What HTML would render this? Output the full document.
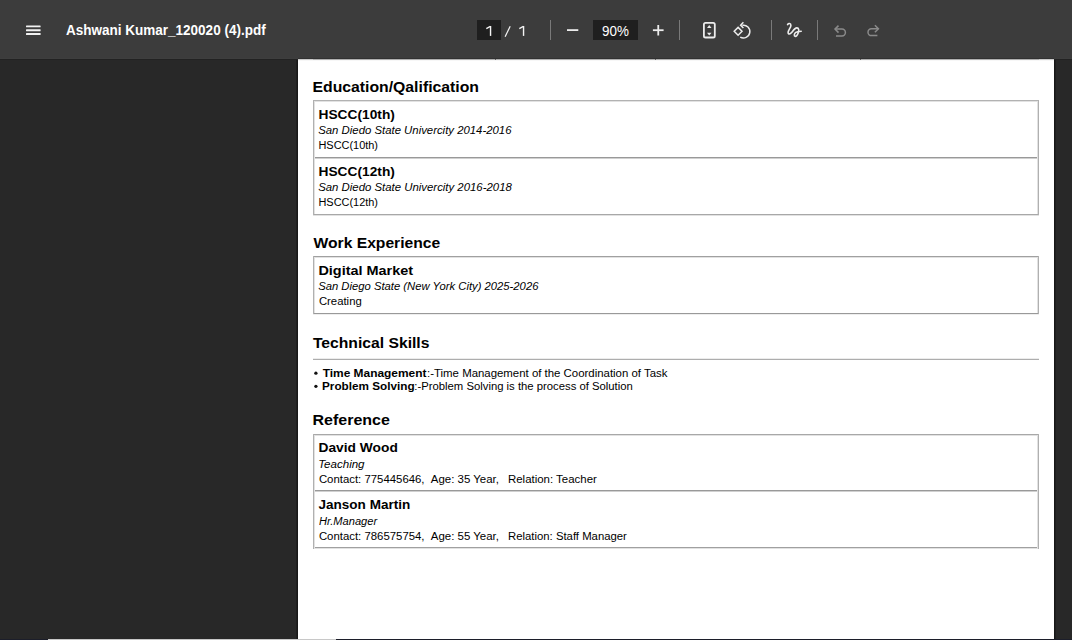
<!DOCTYPE html>
<html><head><meta charset="utf-8">
<style>
*{margin:0;padding:0;box-sizing:border-box}
html,body{width:1072px;height:640px;overflow:hidden;background:#282828;font-family:"Liberation Sans",sans-serif}
.abs{position:absolute}
#tb{position:absolute;left:0;top:0;width:1072px;height:58px;background:#3c3c3c}
#tbsh{position:absolute;left:0;top:58px;width:1072px;height:1px;background:#303030}
.t{position:absolute;white-space:nowrap;line-height:1;color:#000;transform-origin:0 0}
#page{position:absolute;left:298px;top:59px;width:756px;height:580px;background:#fff}
#pl{position:absolute;left:296px;top:59px;width:2px;height:580px;background:linear-gradient(to right,#232323,#141414)}
#pr{position:absolute;left:1054px;top:59px;width:2px;height:580px;background:linear-gradient(to right,#141414,#232323)}
.hd{position:absolute;height:1px;background:#a8a8a8}
.hlt{position:absolute;height:1px;background:#e2e2e2}
.vd{position:absolute;width:1px;background:#b0b0b0}
.vlt{position:absolute;width:1px;background:#e2e2e2}
.h{font-weight:bold;font-size:15px}
.b{font-weight:bold;font-size:13.3px}
.i{font-style:italic;font-size:11.7px}
.r{font-size:11.7px}
.s{font-size:11.7px}
.sb{font-size:11.7px;font-weight:bold}
.wt{color:#fff}
.tt{font-size:14px;font-weight:bold;color:#fff}
.tn{font-size:14px;color:#fff}
.sep{position:absolute;top:20px;width:1px;height:20px;background:#6b6b6b}
</style></head>
<body>
<div id="tb"></div>
<div class="abs" style="left:0;top:58px;width:298px;height:1px;background:#3e3e3e"></div>
<div class="abs" style="left:1054px;top:58px;width:18px;height:1px;background:#3e3e3e"></div>
<div class="abs" style="left:298px;top:58px;width:756px;height:1px;background:#313131"></div>

<!-- toolbar svg -->
<svg class="abs" style="left:0;top:0" width="1072" height="58" viewBox="0 0 1072 58">
 <g fill="#f1f1f1">
  <rect x="26" y="25.5" width="14.6" height="1.85" rx="0.5"/>
  <rect x="26" y="29.3" width="14.6" height="1.85" rx="0.5"/>
  <rect x="26" y="33.1" width="14.6" height="1.85" rx="0.5"/>
 </g>
 <rect x="477" y="20" width="24" height="20" fill="#1f1f1f"/>
 <rect x="593" y="20" width="45" height="20" fill="#1f1f1f"/>
 <g fill="none" stroke="#f4f4f4" stroke-width="1.4">
  <path d="M490.55,26 L490.55,35.9"/>
  <path d="M490.4,26.4 L486.3,28.6"/>
  <path d="M523.55,26 L523.55,35.9"/>
  <path d="M523.4,26.4 L519.3,28.6"/>
  <path d="M505.1,36.8 L510.2,26.3" stroke-width="1.2"/>
 </g>
 <g fill="#7a7a7a">
  <rect x="550" y="20" width="1" height="20"/>
  <rect x="679" y="20" width="1" height="20"/>
  <rect x="771" y="20" width="1" height="20"/>
  <rect x="817" y="20" width="1" height="20"/>
 </g>
 <g fill="#ececec">
  <rect x="567" y="29.2" width="11.3" height="1.8"/>
  <rect x="652.9" y="29.3" width="10.7" height="1.8"/>
  <rect x="657.35" y="25" width="1.8" height="10.5"/>
 </g>
 <g fill="none" stroke="#ececec" stroke-width="1.8">
  <rect x="703.9" y="22.9" width="10.9" height="14.6" rx="1.6"/>
 </g>
 <g fill="#ececec">
  <path d="M707,27.9 L709.25,25.1 L711.5,27.9 Z"/>
  <path d="M707,32.8 L711.5,32.8 L709.25,35.6 Z"/>
 </g>
 <g fill="none" stroke="#ececec" stroke-width="1.5" stroke-linejoin="miter">
  <path d="M738.1,27.4 L742,31.3 L738.1,35.2 L734.2,31.3 Z"/>
  <path d="M742.3,25.3 A6.4,6.4 0 1 1 740.2,37.1"/>
  <path d="M743.4,22.3 L740.6,25.2 L743.4,28.1"/>
 </g>
 <g fill="none" stroke="#ececec" stroke-width="1.6" stroke-linecap="round" stroke-linejoin="round">
  <path d="M787.6,24.6 C788.3,23.2 790.9,23.0 790.9,25.4 C790.9,27.6 788.1,30.2 788.1,32.4 C788.1,34.6 790.3,34.2 791.6,32.6 C792.9,31 794.8,28 796.8,27.9 C798.9,27.8 799.2,30.5 798.2,33 C797.3,35.3 796,36.6 795,36.3 C793.9,36 794.1,33.6 795.8,32.4 C796.8,31.7 798.5,31.4 801.2,31.2"/>
 </g>
 <g fill="none" stroke="#8a8a8a" stroke-width="1.5">
  <path d="M835,29.1 L842,29.1 A3.4,3.4 0 0 1 842,35.9 L836,35.9"/>
  <path d="M838.5,25.6 L835,29.1 L838.5,32.6"/>
  <path d="M878.4,28.8 L871.4,28.8 A3.4,3.4 0 0 0 871.4,35.6 L877.4,35.6"/>
  <path d="M874.9,25.3 L878.4,28.8 L874.9,32.3"/>
 </g>
</svg>

<!-- page -->
<div id="pl"></div><div id="pr"></div>
<div class="abs" style="left:0;top:59px;width:298px;height:1px;background:#222"></div>
<div class="abs" style="left:1054px;top:59px;width:18px;height:1px;background:#222"></div>
<div id="page"></div>
<div class="abs" style="left:298px;top:59px;width:756px;height:1px;background:#cbcbcb"></div>
<div class="abs" style="left:298px;top:60px;width:756px;height:1px;background:#f7f7f7"></div>
<div class="abs" style="left:313px;top:59px;width:726px;height:1px;background:#b0b0b0"></div>
<div class="abs" style="left:495px;top:59px;width:1px;height:1px;background:#606060"></div>
<div class="abs" style="left:655px;top:59px;width:1px;height:1px;background:#606060"></div>
<div class="abs" style="left:860px;top:59px;width:1px;height:1px;background:#606060"></div>

<!-- edu box -->
<div class="hd" style="left:313px;top:100px;width:726px;background:#b2b2b2"></div>
<div class="hlt" style="left:314px;top:101px;width:723px"></div>
<div class="hd" style="left:313px;top:157px;width:726px;background:#999"></div>
<div class="hlt" style="left:314px;top:158px;width:723px;background:#d0d0d0"></div>
<div class="hd" style="left:313px;top:214px;width:726px"></div>
<div class="hlt" style="left:313px;top:215px;width:726px"></div>
<div class="vd" style="left:313px;top:100px;height:115px"></div>
<div class="vlt" style="left:314px;top:101px;height:113px"></div>
<div class="vd" style="left:1038px;top:100px;height:115px"></div>
<div class="vlt" style="left:1037px;top:101px;height:113px"></div>

<!-- work box -->
<div class="hd" style="left:313px;top:256px;width:726px;background:#a0a0a0"></div>
<div class="hlt" style="left:314px;top:257px;width:723px"></div>
<div class="hd" style="left:313px;top:313px;width:726px;background:#999"></div>
<div class="hlt" style="left:313px;top:314px;width:726px;background:#eee"></div>
<div class="vd" style="left:313px;top:256px;height:58px"></div>
<div class="vlt" style="left:314px;top:257px;height:56px"></div>
<div class="vd" style="left:1038px;top:256px;height:58px"></div>
<div class="vlt" style="left:1037px;top:257px;height:56px"></div>

<!-- skills rule -->
<div class="hd" style="left:313px;top:359px;width:726px;background:#adadad"></div>
<div class="hlt" style="left:313px;top:358px;width:726px;background:#ececec"></div>

<!-- ref box -->
<div class="hd" style="left:313px;top:434px;width:726px;background:#a8a8a8"></div>
<div class="hlt" style="left:314px;top:435px;width:723px"></div>
<div class="hd" style="left:313px;top:490px;width:726px;background:#999"></div>
<div class="hlt" style="left:314px;top:491px;width:723px;background:#d0d0d0"></div>
<div class="hd" style="left:313px;top:547px;width:726px;background:#a0a0a0"></div>
<div class="hlt" style="left:313px;top:548px;width:726px"></div>
<div class="vd" style="left:313px;top:434px;height:115px"></div>
<div class="vlt" style="left:314px;top:435px;height:113px"></div>
<div class="vd" style="left:1038px;top:434px;height:115px"></div>
<div class="vlt" style="left:1037px;top:435px;height:113px"></div>

<svg class="abs" style="left:0;top:0" width="1072" height="640" viewBox="0 0 1072 640"><circle cx="315.9" cy="373.2" r="1.65" fill="#111"/><circle cx="315.9" cy="386.3" r="1.65" fill="#111"/></svg>
<div class="t tt" id="tt" style="left:66px;top:23px;transform:translateX(0.01px) scaleX(0.9646)">Ashwani Kumar_120020 (4).pdf</div>
<div class="t tn" id="zm" style="left:601px;top:24px;transform:translateX(0.99px) scaleX(0.9584)">90%</div>
<div class="t h" id="h1" style="left:313px;top:79px;transform:translateX(-0.52px) scaleX(1.0513)">Education/Qalification</div>
<div class="t b" id="b1" style="left:319px;top:108px;transform:translateX(-0.48px) scaleX(1.0336)">HSCC(10th)</div>
<div class="t i" id="i1" style="left:319px;top:124px;transform:translateX(-0.77px) scaleX(0.9719)">San Diedo State Univercity 2014-2016</div>
<div class="t r" id="r1" style="left:319px;top:139px;transform:translateX(-0.52px) scaleX(0.9352)">HSCC(10th)</div>
<div class="t b" id="b2" style="left:319px;top:165px;transform:translateX(-0.48px) scaleX(1.0336)">HSCC(12th)</div>
<div class="t i" id="i2" style="left:319px;top:181px;transform:translateX(-0.82px) scaleX(0.9739)">San Diedo State Univercity 2016-2018</div>
<div class="t r" id="r2" style="left:319px;top:196px;transform:translateX(-0.52px) scaleX(0.9352)">HSCC(12th)</div>
<div class="t h" id="h2" style="left:313px;top:235px;transform:translateX(0.50px) scaleX(1.0436)">Work Experience</div>
<div class="t b" id="bw" style="left:319px;top:264px;transform:translateX(-0.59px) scaleX(1.0859)">Digital Market</div>
<div class="t i" id="iw" style="left:319px;top:280px;transform:translateX(-0.86px) scaleX(0.9642)">San Diego State (New York City) 2025-2026</div>
<div class="t r" id="rw" style="left:319px;top:295px;transform:translateX(-0.11px) scaleX(0.9700)">Creating</div>
<div class="t h" id="h3" style="left:313px;top:335px;transform:translateX(-0.11px) scaleX(1.0460)">Technical Skills</div>
<div class="t sb" id="sk1b" style="left:322px;top:367px;transform:translateX(0.67px) scaleX(1.0202)">Time Management</div>
<div class="t s" id="sk1r" style="left:427px;top:367px;transform:translateX(0.07px) scaleX(0.9761)">:-Time Management of the Coordination of Task</div>
<div class="t sb" id="sk2b" style="left:322px;top:380px;transform:translateX(0.01px) scaleX(1.0039)">Problem Solving</div>
<div class="t s" id="sk2r" style="left:414px;top:380px;transform:translateX(0.31px) scaleX(0.9665)">:-Problem Solving is the process of Solution</div>
<div class="t h" id="h4" style="left:313px;top:412px;transform:translateX(-0.51px) scaleX(1.0665)">Reference</div>
<div class="t b" id="bref1" style="left:319px;top:441px;transform:translateX(-0.49px) scaleX(1.0355)">David Wood</div>
<div class="t i" id="iref1" style="left:319px;top:458px;transform:translateX(-0.87px) scaleX(0.9873)">Teaching</div>
<div class="t r" id="c1a" style="left:319px;top:473px;transform:translateX(-0.10px) scaleX(0.9734)">Contact: 775445646,</div>
<div class="t r" id="c1b" style="left:431px;top:473px;transform:translateX(-0.18px) scaleX(0.9798)">Age: 35 Year,</div>
<div class="t r" id="c1c" style="left:509px;top:473px;transform:translateX(-1.00px) scaleX(0.9787)">Relation: Teacher</div>
<div class="t b" id="bref2" style="left:319px;top:498px;transform:translateX(-0.46px) scaleX(1.0168)">Janson Martin</div>
<div class="t i" id="iref2" style="left:319px;top:515px;transform:translateX(-0.00px) scaleX(0.9488)">Hr.Manager</div>
<div class="t r" id="c2a" style="left:319px;top:530px;transform:translateX(-0.10px) scaleX(0.9734)">Contact: 786575754,</div>
<div class="t r" id="c2b" style="left:431px;top:530px;transform:translateX(-0.18px) scaleX(0.9798)">Age: 55 Year,</div>
<div class="t r" id="c2c" style="left:509px;top:530px;transform:translateX(-0.99px) scaleX(0.9697)">Relation: Staff Manager</div>

<!-- bottom strip -->
<div class="abs" style="left:0;top:639px;width:1072px;height:1px;background:#1c1e2a"></div>
<div class="abs" style="left:48px;top:639px;width:288px;height:1px;background:#c8c8c8"></div>
</body></html>
